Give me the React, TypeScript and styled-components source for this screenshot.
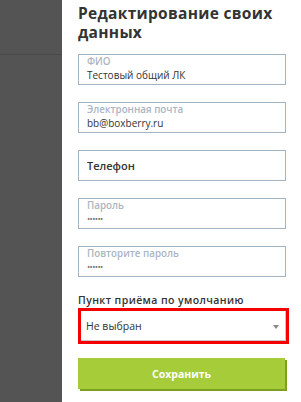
import React from 'react'
import styled, { createGlobalStyle } from 'styled-components'

const GlobalStyle = createGlobalStyle`
  html, body {
    margin: 0;
    padding: 0;
    background: #fff;
    font-family: "Open Sans", "Liberation Sans", sans-serif;
  }
`

interface Field {
  label: string
  value?: string
  password?: boolean
}

const fields: Field[] = [
  { label: 'ФИО', value: 'Тестовый общий ЛК' },
  { label: 'Электронная почта', value: 'bb@boxberry.ru' },
  { label: 'Телефон' },
  { label: 'Пароль', value: '••••••', password: true },
  { label: 'Повторите пароль', value: '••••••', password: true }
]

export default function App() {
  return (
    <Page>
      <GlobalStyle />
      <Sidebar>
        <SidebarTop />
      </Sidebar>
      <Content>
        <Title>Редактирование своих данных</Title>
        <Form>
          {fields.map((f) => (
            <InputBox key={f.label} empty={!f.value}>
              <Label empty={!f.value}>{f.label}</Label>
              {f.value && <Value password={f.password}>{f.value}</Value>}
            </InputBox>
          ))}
        </Form>
        <SelectLabel>Пункт приёма по умолчанию</SelectLabel>
        <Highlight>
          <Select>
            <span>Не выбран</span>
            <Arrow />
          </Select>
        </Highlight>
        <SaveButton>Сохранить</SaveButton>
      </Content>
    </Page>
  )
}

const Page = styled.div`
  display: flex;
  width: 301px;
  height: 402px;
  overflow: hidden;
`

const Sidebar = styled.div`
  width: 62px;
  flex-shrink: 0;
  background: #545454;
`

const SidebarTop = styled.div`
  height: 54px;
  border-bottom: 1px solid #4a4a4a;
`

const Content = styled.div`
  flex: 1;
  padding: 4px 12px 0 16px;
  display: flex;
  flex-direction: column;
`

const Title = styled.h1`
  margin: 0 0 12px;
  font-size: 15.5px;
  line-height: 19px;
  font-weight: 700;
  color: #333;
  letter-spacing: 0.3px;
`

const Form = styled.div`
  display: flex;
  flex-direction: column;
  gap: 17px;
  width: 208px;
`

const InputBox = styled.div<{ empty?: boolean }>`
  box-sizing: border-box;
  height: 31px;
  border: 1.5px solid #a2b4c4;
  padding: 0 8px;
  display: flex;
  flex-direction: column;
  justify-content: ${(p) => (p.empty ? 'center' : 'flex-start')};
`

const Label = styled.div<{ empty?: boolean }>`
  font-size: ${(p) => (p.empty ? '11px' : '9.8px')};
  line-height: ${(p) => (p.empty ? '15px' : '13px')};
  font-weight: 600;
  color: ${(p) => (p.empty ? '#333' : '#a9b6c3')};
`

const Value = styled.div<{ password?: boolean }>`
  font-size: ${(p) => (p.password ? '8.5px' : '10px')};
  line-height: 14px;
  color: ${(p) => (p.password ? '#777' : '#333')};
  letter-spacing: ${(p) => (p.password ? '-0.6px' : '0')};
`

const SelectLabel = styled.div`
  margin-top: 17px;
  font-size: 10.5px;
  line-height: 12px;
  font-weight: 600;
  color: #333;
  letter-spacing: 0.4px;
`

const Highlight = styled.div`
  margin-top: 2px;
  width: 211px;
  box-sizing: border-box;
  border: 3px solid #f50000;
`

const Select = styled.div`
  height: 30px;
  box-sizing: border-box;
  border-right: 1.5px solid #c8c8c8;
  border-bottom: 1.5px solid #c8c8c8;
  padding: 0 6px 0 5px;
  display: flex;
  align-items: center;
  justify-content: space-between;
  font-size: 10.5px;
  color: #333;
`

const Arrow = styled.span`
  width: 0;
  height: 0;
  border-left: 3.5px solid transparent;
  border-right: 3.5px solid transparent;
  border-top: 4px solid #888;
  margin-top: 2px;
`

const SaveButton = styled.button`
  margin-top: 14px;
  width: 207px;
  height: 31px;
  border: none;
  background: #a6cc3a;
  box-shadow: 2px 2px 0 #7d9e22;
  color: #fff;
  font-family: inherit;
  font-size: 10.5px;
  font-weight: 700;
  padding: 0;
`
